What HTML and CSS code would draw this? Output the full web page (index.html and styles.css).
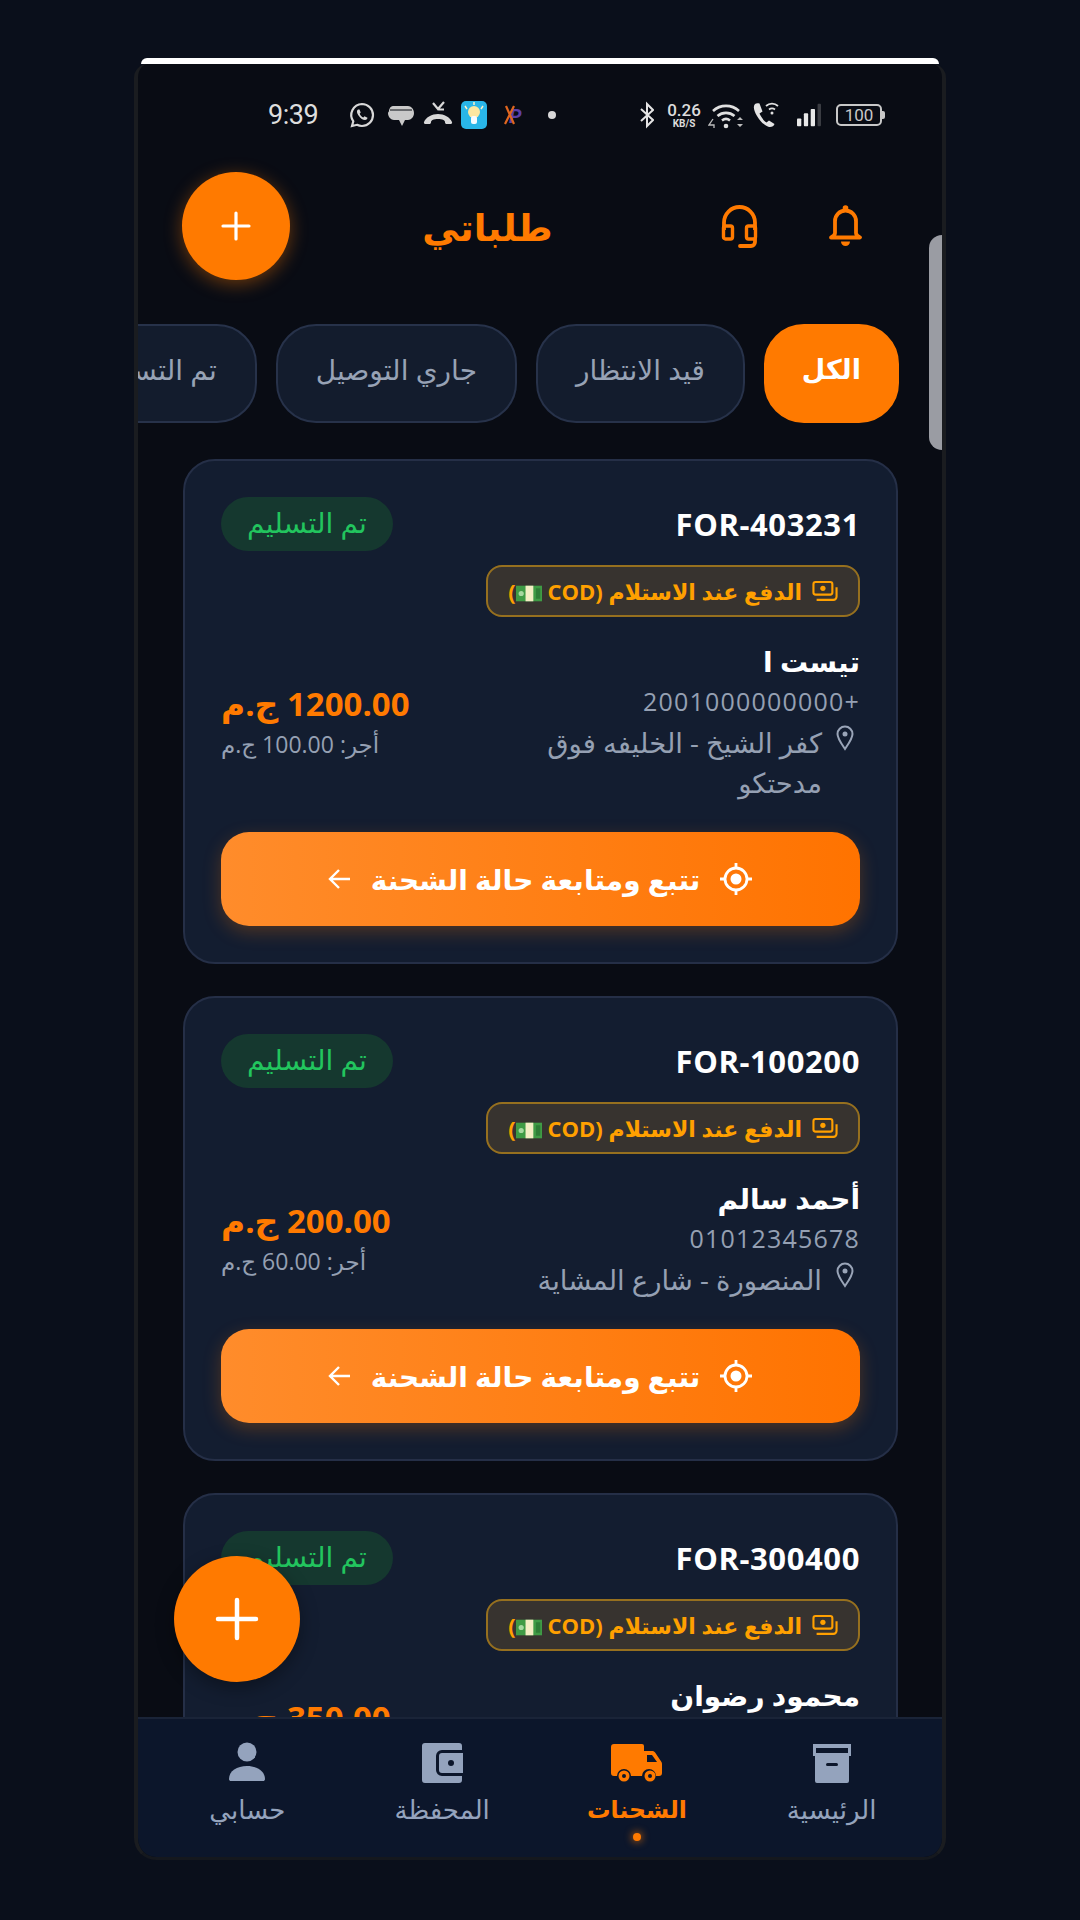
FILE: index.html
```html
<!DOCTYPE html>
<html lang="ar" dir="rtl">
<head>
<meta charset="utf-8">
<title>طلباتي</title>
<link rel="stylesheet" href="styles.css">
</head>
<body>
<div class="phone">
  <div class="strip"></div>
  <div class="screen">
  <div class="statusbar" dir="ltr">
    <span class="time">9:39</span>
    <svg class="si si-wa" viewBox="0 0 28 28"><path d="M14 3a11 11 0 0 1 0 22c-2 0-3.500-.4-5-1.200L4 25l1.300-4.700A11 11 0 0 1 14 3z" fill="none" stroke="#d8d8d8" stroke-width="2.200"/><path d="M10 8.500c-1.500 1-1.500 3 .5 6s4.500 4.500 6.500 4.500c1.500 0 2.500-1 2.500-2.200l-3-1.500-1.200 1.200c-1.500-.6-3-2.200-3.600-3.800l1-1.200-1.200-3z" fill="#d8d8d8"/></svg>
    <svg class="si si-msg" viewBox="0 0 28 28"><path d="M6 5h15c3 0 6 3 6 7s-3 7-6 7h-3l-3 6-3-6H7c-3 0-6-3-6-7 0-1 1-1 1-2s1-5 4-5z" fill="#c9c9c9"/><path d="M3 9h22" stroke="#090c13" stroke-width="1"/></svg>
    <svg class="si si-miss" viewBox="0 0 30 28"><path d="M1 21c2-5 8-8 14-8s12 3 14 8c.4 1-.3 2-1.300 2h-4c-1 0-1.700-.8-1.700-1.800 0-1-.5-1.700-1.500-2.200-1.500-.7-3.500-1-5.500-1s-4 .3-5.500 1c-1 .5-1.500 1.200-1.500 2.200 0 1-.7 1.800-1.700 1.800h-4C1.300 23 .6 22 1 21z" fill="#d8d8d8"/><path d="M10 2l5 6 6-7M15.500 8.500H21" fill="none" stroke="#d8d8d8" stroke-width="2.200"/></svg>
    <svg class="si si-app" viewBox="0 0 26 28"><rect width="26" height="28" rx="5" fill="#29b6e8"/><circle cx="13" cy="11" r="6" fill="#fbe7a0"/><rect x="10" y="15" width="6" height="8" rx="2" fill="#f4fbff"/><path d="M13 1v3M4 5l2 3M22 5l-2 3" stroke="#fdf3c8" stroke-width="1.500"/></svg>
    <svg class="si si-xp" viewBox="0 0 26 24"><text x="8" y="20" class="xp-text">P</text><path d="M5 3l8 18M13 3L4 21" stroke="#e0661f" stroke-width="2.200" fill="none"/></svg>
    <span class="sdot"></span>
    <svg class="si si-bt" viewBox="0 0 14 28"><path d="M1 8l12 11-6 6V3l6 6L1 20" fill="none" stroke="#e4e4e4" stroke-width="2"/></svg>
    <span class="speed"><b>0.26</b><i>KB/S</i></span>
    <svg class="si si-wifi" viewBox="0 0 36 30"><path d="M5 11a19 19 0 0 1 26 0M9.500 16a13 13 0 0 1 17 0M14 20.500a6.500 6.500 0 0 1 8 0" fill="none" stroke="#e0e0e0" stroke-width="2.600"/><circle cx="18" cy="26" r="2.300" fill="#e0e0e0"/><path d="M29 20l3-3 3 3zM29 24l3 3 3-3z" fill="#bdbdbd"/><path d="M5 19l-4 6h5v3" fill="none" stroke="#bdbdbd" stroke-width="1.300"/></svg>
    <svg class="si si-call" viewBox="0 0 30 30"><path d="M4 4c-2 2-1.500 6 2 12s8 10 12 11c2.500.5 5-1 5.500-3l-5.500-3.500-2.500 2C13 21 10 17 8.500 13.500l3-2L8.500 3.500C7 3 5 3 4 4z" fill="#e4e4e4"/><path d="M15 6a9 9 0 0 1 12 0M18 9.500a5 5 0 0 1 6 0" fill="none" stroke="#e0e0e0" stroke-width="1.800"/><circle cx="21" cy="13" r="1.500" fill="#e0e0e0"/></svg>
    <svg class="si si-sig" viewBox="0 0 28 28"><rect x="0" y="18" width="5" height="9" rx="1" fill="#e8e8e8"/><rect x="8" y="12" width="5" height="15" rx="1" fill="#e8e8e8"/><rect x="16" y="7" width="5" height="20" rx="1" fill="#e8e8e8"/><rect x="24" y="1" width="4" height="26" rx="1" fill="#3a3c42"/></svg>
    <span class="battery"><span class="battery-body">100</span><span class="battery-cap"></span></span>
  </div>

  <header class="topbar">
    <div class="top-icons">
      <svg class="icon-bell" viewBox="0 0 33 44"><circle cx="16.500" cy="4" r="2.800" fill="#ff7a00"/><path d="M6 29V17a10.500 10.500 0 0 1 21 0v12c0 2 2 3.500 4 4.500H2c2-1 4-2.500 4-4.500z" fill="none" stroke="#ff7a00" stroke-width="3.800" stroke-linejoin="round"/><path d="M12 37.500h9a4.500 4.500 0 0 1-9 0z" fill="#ff7a00"/></svg>
      <svg class="icon-head" viewBox="0 0 37 45"><path d="M3 26V18.500a15.500 15.500 0 0 1 31 0V26" fill="none" stroke="#ff7a00" stroke-width="3.800"/><rect x="2.500" y="22" width="9" height="13" rx="2" fill="none" stroke="#ff7a00" stroke-width="3.400"/><rect x="25.500" y="22" width="9" height="13" rx="2" fill="none" stroke="#ff7a00" stroke-width="3.400"/><path d="M34 35v3a4 4 0 0 1-4 4H19" fill="none" stroke="#ff7a00" stroke-width="3.800" stroke-linecap="round"/></svg>
    </div>
    <h1 class="title">طلباتي</h1>
    <button class="add-small"><svg viewBox="0 0 30 30"><path d="M15 2v26M2 15h26" stroke="#fff" stroke-width="3.200" stroke-linecap="round"/></svg></button>
  </header>

  <nav class="tabs">
    <span class="tab tab-active">الكل</span>
    <span class="tab">قيد الانتظار</span>
    <span class="tab">جاري التوصيل</span>
    <span class="tab">تم التسليم</span>
  </nav>

  <main class="list">
    <article class="card">
      <div class="card-head"><span class="order">FOR-403231</span><span class="state">تم التسليم</span></div>
      <div class="cod"><svg class="cod-icon" viewBox="0 0 24 20"><rect x="1" y="1" width="18" height="12" rx="2" fill="none" stroke="#ffa000" stroke-width="2"/><circle cx="10" cy="7" r="2.500" fill="#ffa000"/><path d="M23 6v9a3 3 0 0 1-3 3H4" fill="none" stroke="#ffa000" stroke-width="2"/></svg><span>الدفع عند الاستلام (COD <svg class="bill" viewBox="0 0 30 18"><rect width="30" height="18" fill="#3f9b45"/><rect x="11" width="9" height="18" fill="#f3eec4"/><circle cx="6" cy="9" r="3" fill="#a6d8a0"/><rect x="23" y="3" width="5" height="12" fill="#2e7d36"/></svg>)</span></div>
      <div class="card-body">
        <div class="customer">
          <div class="name">تيست ا</div>
          <div class="phone-no">+2001000000000</div>
          <div class="addr"><svg class="pin" viewBox="0 0 18 26"><path d="M9 1.500a7.500 7.500 0 0 1 7.500 7.500c0 4.500-4.500 10.500-7.500 15-3-4.500-7.500-10.500-7.500-15A7.500 7.500 0 0 1 9 1.500z" fill="none" stroke="#9aa5b8" stroke-width="2"/><circle cx="9" cy="9" r="2.500" fill="#9aa5b8"/></svg><span class="addr-text">كفر الشيخ - الخليفه فوق مدحتكو</span></div>
        </div>
        <div class="money"><div class="price">1200.00 ج.م</div><div class="fee">أجر: 100.00 ج.م</div></div>
      </div>
      <button class="track"><svg class="target" viewBox="0 0 34 34"><circle cx="17" cy="17" r="11" fill="none" stroke="#fff" stroke-width="2.800"/><circle cx="17" cy="17" r="5.500" fill="#fff"/><path d="M17 1v5M17 28v5M1 17h5M28 17h5" stroke="#fff" stroke-width="2.800"/></svg><span>تتبع ومتابعة حالة الشحنة</span><svg class="arrow" viewBox="0 0 24 24"><path d="M22 12H3M11 3l-9 9 9 9" fill="none" stroke="#fff" stroke-width="2.400"/></svg></button>
    </article>

    <article class="card">
      <div class="card-head"><span class="order">FOR-100200</span><span class="state">تم التسليم</span></div>
      <div class="cod"><svg class="cod-icon" viewBox="0 0 24 20"><rect x="1" y="1" width="18" height="12" rx="2" fill="none" stroke="#ffa000" stroke-width="2"/><circle cx="10" cy="7" r="2.500" fill="#ffa000"/><path d="M23 6v9a3 3 0 0 1-3 3H4" fill="none" stroke="#ffa000" stroke-width="2"/></svg><span>الدفع عند الاستلام (COD <svg class="bill" viewBox="0 0 30 18"><rect width="30" height="18" fill="#3f9b45"/><rect x="11" width="9" height="18" fill="#f3eec4"/><circle cx="6" cy="9" r="3" fill="#a6d8a0"/><rect x="23" y="3" width="5" height="12" fill="#2e7d36"/></svg>)</span></div>
      <div class="card-body">
        <div class="customer">
          <div class="name">أحمد سالم</div>
          <div class="phone-no">01012345678</div>
          <div class="addr"><svg class="pin" viewBox="0 0 18 26"><path d="M9 1.500a7.500 7.500 0 0 1 7.500 7.500c0 4.500-4.500 10.500-7.500 15-3-4.500-7.500-10.500-7.500-15A7.500 7.500 0 0 1 9 1.500z" fill="none" stroke="#9aa5b8" stroke-width="2"/><circle cx="9" cy="9" r="2.500" fill="#9aa5b8"/></svg><span class="addr-text">المنصورة - شارع المشاية</span></div>
        </div>
        <div class="money"><div class="price">200.00 ج.م</div><div class="fee">أجر: 60.00 ج.م</div></div>
      </div>
      <button class="track"><svg class="target" viewBox="0 0 34 34"><circle cx="17" cy="17" r="11" fill="none" stroke="#fff" stroke-width="2.800"/><circle cx="17" cy="17" r="5.500" fill="#fff"/><path d="M17 1v5M17 28v5M1 17h5M28 17h5" stroke="#fff" stroke-width="2.800"/></svg><span>تتبع ومتابعة حالة الشحنة</span><svg class="arrow" viewBox="0 0 24 24"><path d="M22 12H3M11 3l-9 9 9 9" fill="none" stroke="#fff" stroke-width="2.400"/></svg></button>
    </article>

    <article class="card">
      <div class="card-head"><span class="order">FOR-300400</span><span class="state">تم التسليم</span></div>
      <div class="cod"><svg class="cod-icon" viewBox="0 0 24 20"><rect x="1" y="1" width="18" height="12" rx="2" fill="none" stroke="#ffa000" stroke-width="2"/><circle cx="10" cy="7" r="2.500" fill="#ffa000"/><path d="M23 6v9a3 3 0 0 1-3 3H4" fill="none" stroke="#ffa000" stroke-width="2"/></svg><span>الدفع عند الاستلام (COD <svg class="bill" viewBox="0 0 30 18"><rect width="30" height="18" fill="#3f9b45"/><rect x="11" width="9" height="18" fill="#f3eec4"/><circle cx="6" cy="9" r="3" fill="#a6d8a0"/><rect x="23" y="3" width="5" height="12" fill="#2e7d36"/></svg>)</span></div>
      <div class="card-body">
        <div class="customer customer-clipped">
          <div class="name">محمود رضوان</div>
        </div>
        <div class="money"><div class="price">350.00 ج.م</div><div class="fee">&nbsp;</div></div>
      </div>
    </article>
  </main>

  <div class="scrollbar"></div>
  <button class="fab"><svg viewBox="0 0 44 44"><path d="M22 3v38M3 22h38" stroke="#fff" stroke-width="4.500" stroke-linecap="round"/></svg></button>

  <footer class="bottomnav">
    <div class="nav-item">
      <svg class="nav-icon" viewBox="0 0 44 44"><path d="M3 3h38v12h-2v25a2 2 0 0 1-2 2H7a2 2 0 0 1-2-2V15H3z" fill="#94a3bd"/><rect x="6" y="7" width="32" height="5" fill="#0c162b"/><rect x="16" y="22" width="12" height="3" rx="1.500" fill="#0c162b"/></svg>
      <span>الرئيسية</span>
    </div>
    <div class="nav-item nav-active">
      <svg class="nav-icon nav-truck" viewBox="0 0 52 40"><path d="M3 1h28a2 2 0 0 1 2 2v5h8c1.500 0 2.500.6 3.300 1.800l6 9c.5.7.7 1.500.7 2.200v9a3 3 0 0 1-3 3h-3a7 7 0 0 0-14 0H20a7 7 0 0 0-14 0H3a3 3 0 0 1-3-3V4a3 3 0 0 1 3-3z" fill="#ff7a00"/><path d="M36 12h5l5 7H36z" fill="#0c162b"/><circle cx="13" cy="33" r="5.500" fill="#ff7a00"/><circle cx="13" cy="33" r="2" fill="#0c162b"/><circle cx="39" cy="33" r="5.500" fill="#ff7a00"/><circle cx="39" cy="33" r="2" fill="#0c162b"/></svg>
      <span>الشحنات</span>
      <i class="nav-dot"></i>
    </div>
    <div class="nav-item">
      <svg class="nav-icon" viewBox="0 0 44 44"><path d="M5 2h34a3 3 0 0 1 3 3v4H22a6 6 0 0 0-6 6v14a6 6 0 0 0 6 6h20v4a3 3 0 0 1-3 3H5a3 3 0 0 1-3-3V5a3 3 0 0 1 3-3z" fill="#94a3bd"/><path d="M22 12h21v20H22a3 3 0 0 1-3-3V15a3 3 0 0 1 3-3z" fill="#94a3bd"/><circle cx="31" cy="22" r="3" fill="#0c162b"/></svg>
      <span>المحفظة</span>
    </div>
    <div class="nav-item">
      <svg class="nav-icon" viewBox="0 0 44 44"><circle cx="22" cy="11" r="9.500" fill="#94a3bd"/><path d="M4 38c0-8 8-13 18-13s18 5 18 13c0 1.500-1 2-2 2H6c-1 0-2-.5-2-2z" fill="#94a3bd"/></svg>
      <span>حسابي</span>
    </div>
  </footer>
  </div>
</div>
</body>
</html>
```
FILE: styles.css
```css
* { box-sizing: border-box; margin: 0; padding: 0; }
html, body { height: 100%; }
body {
  width: 1080px;
  height: 1920px;
  background: #0a0f1b;
  font-family: "Open Sans", "DejaVu Sans", sans-serif;
  padding: 58px 134px 60px 134px;
  overflow: hidden;
}
.phone {
  height: 100%;
  width: 812px;
  display: flex;
  flex-direction: column;
}
.strip {
  flex: none;
  height: 6px;
  margin: 0 7px;
  background: #fff;
  border-radius: 14px 14px 0 0;
}
.screen {
  position: relative;
  flex: 1;
  min-height: 0;
  display: flex;
  flex-direction: column;
  background: #090c14;
  border-left: 4px solid #1a1c20;
  border-right: 4px solid #1a1c20;
  border-bottom: 3px solid #15181e;
  border-radius: 14px 14px 22px 22px;
  overflow: hidden;
}
button { border: 0; font-family: inherit; }

/* status bar */
.statusbar {
  height: 102px;
  flex: none;
  display: flex;
  align-items: center;
  padding: 0 57px 0 130px;
  color: #e2e2e2;
}
.time { font: 400 27px Roboto, sans-serif; width: 52px; color: #dedede; letter-spacing: -.5px; }
.si { flex: none; display: block; }
.si-wa { width: 28px; height: 28px; margin-left: 28px; }
.si-msg { width: 28px; height: 28px; margin-left: 11px; }
.si-miss { width: 30px; height: 28px; margin-left: 8px; }
.si-app { width: 26px; height: 28px; margin-left: 8px; }
.si-xp { width: 26px; height: 24px; margin-left: 14px; }
.xp-text { font: italic 700 20px Roboto, sans-serif; fill: #5b3fa8; }
.sdot { width: 8px; height: 8px; border-radius: 50%; background: #d8d8d8; margin-left: 21px; flex: none; }
.si-bt { width: 14px; height: 28px; margin-left: auto; }
.speed { width: 36px; margin-left: 12px; display: flex; flex-direction: column; align-items: center; font-family: Roboto, sans-serif; line-height: 1; color: #dcdcdc; }
.speed b { font-weight: 500; font-size: 17px; }
.speed i { font-style: normal; font-weight: 700; font-size: 10px; }
.si-wifi { width: 36px; height: 30px; margin-left: 6px; }
.si-call { width: 30px; height: 30px; margin-left: 7px; }
.si-sig { width: 24px; height: 24px; margin-left: 16px; }
.battery { display: flex; align-items: center; margin-left: 15px; }
.battery-body { width: 46px; height: 22px; border: 2px solid #c8c8c8; border-radius: 5px; font: 400 17px/18px Roboto, sans-serif; text-align: center; color: #c8c8c8; }
.battery-cap { width: 3px; height: 8px; background: #c8c8c8; border-radius: 0 2px 2px 0; }

/* top bar */
.topbar {
  height: 120px;
  flex: none;
  display: flex;
  align-items: center;
  justify-content: space-between;
  padding: 0 80px 0 44px;
}
.top-icons { display: flex; align-items: center; gap: 71px; }
.icon-bell { width: 33px; height: 44px; flex: none; display: block; }
.icon-head { width: 37px; height: 45px; flex: none; display: block; }
.title { font-size: 37px; font-weight: 700; color: #ff7a00; line-height: 1; margin-right: 36px; }
.add-small {
  width: 108px; height: 108px; border-radius: 50%;
  background: #ff7a00;
  box-shadow: 0 4px 18px rgba(255,122,0,.4);
  display: flex; align-items: center; justify-content: center;
}
.add-small svg { width: 30px; height: 30px; }

/* tabs */
.tabs {
  flex: none;
  height: 99px;
  margin-top: 38px;
  display: flex;
  gap: 19px;
  padding-right: 43px;
  overflow: hidden;
}
.tab {
  flex: none;
  height: 99px;
  padding: 0 38px 10px;
  border-radius: 40px;
  background: #131c2d;
  border: 2px solid #27324a;
  color: #97a2b5;
  font-size: 28px;
  display: flex;
  align-items: center;
  white-space: nowrap;
}
.tab-active { background: #ff7a00; border-color: #ff7a00; color: #fff; font-weight: 700; font-size: 27px; padding: 0 36px 10px; }

/* list */
.list {
  flex: 1;
  min-height: 0;
  overflow: hidden;
  padding: 36px 44px 0 45px;
  display: flex;
  flex-direction: column;
  gap: 32px;
}
.card {
  flex: none;
  background: #131d30;
  border: 2px solid #252f47;
  border-radius: 32px;
  padding: 36px;
}
.card-head { display: flex; justify-content: space-between; align-items: center; height: 54px; }
.order { font: 700 31px "Open Sans", sans-serif; color: #fff; direction: ltr; letter-spacing: .6px; }
.state {
  height: 54px; width: 172px; border-radius: 27px;
  background: #15382f; color: #22c55e;
  font-size: 28px; font-weight: 500;
  display: flex; align-items: center; justify-content: center; padding-bottom: 4px;
}
.cod {
  margin-top: 14px;
  width: max-content;
  height: 52px;
  padding: 0 20px;
  display: flex;
  align-items: center;
  gap: 10px;
  border-radius: 16px;
  background: #37332f;
  border: 2px solid #96701f;
  color: #ffa000;
  font-size: 22px;
  font-weight: 700;
  white-space: pre;
}
.cod-icon { width: 26px; height: 21px; flex: none; }
.bill { width: 26px; height: 17px; vertical-align: -2px; }
.card-body { display: flex; justify-content: space-between; align-items: center; margin-top: 21px; }
.customer { width: 340px; }
.customer-clipped { height: 125px; }
.name { font-size: 28px; font-weight: 700; color: #fff; line-height: 46px; }
.phone-no { font: 400 25px/34px "Open Sans", sans-serif; color: #95a0b3; letter-spacing: 1.200px; }
.addr { display: flex; gap: 14px; margin-top: 5px; align-items: flex-start; }
.pin { width: 18px; height: 26px; flex: none; margin-top: 2px; margin-right: 6px; }
.addr-text { font-size: 27.5px; line-height: 40px; color: #95a0b3; }
.money { display: flex; flex-direction: column; align-items: flex-end; }
.price { font-size: 33px; font-weight: 700; color: #ff7a00; line-height: 42px; }
.fee { font-size: 23px; color: #95a0b3; line-height: 30px; margin-top: 4px; }
.track {
  margin-top: 29px;
  width: 100%;
  height: 94px;
  border-radius: 28px;
  background: linear-gradient(to right, #ff8c2b, #ff7300);
  box-shadow: 0 6px 18px rgba(255,122,0,.25);
  color: #fff;
  font-size: 28px;
  font-weight: 700;
  display: flex;
  align-items: center;
  justify-content: center;
  gap: 19px;
}
.target { width: 34px; height: 34px; flex: none; }
.arrow { width: 24px; height: 24px; flex: none; }

/* overlays */
.scrollbar {
  position: absolute;
  right: 0; top: 171px;
  width: 13px; height: 215px;
  background: #9a9ca3;
  border-radius: 14px 0 0 14px;
}
.fab {
  position: absolute;
  left: 36px; top: 1492px;
  width: 126px; height: 126px;
  border-radius: 50%;
  background: #ff7a00;
  box-shadow: 0 6px 18px rgba(0,0,0,.35);
  display: flex; align-items: center; justify-content: center;
}
.fab svg { width: 44px; height: 44px; }

/* bottom nav */
.bottomnav {
  flex: none;
  height: 140px;
  background: #0c162b;
  border-top: 2px solid #1a2438;
  display: grid;
  grid-template-columns: repeat(4, 1fr);
  padding: 22px 13px 0 12px;
}
.nav-item { display: flex; flex-direction: column; align-items: center; color: #94a3bd; font-size: 26px; position: relative; }
.nav-icon { width: 44px; height: 44px; flex: none; }
.nav-truck { width: 52px; }
.nav-item span { margin-top: 6px; line-height: 36px; }
.nav-active { color: #ff7a00; font-weight: 700; font-size: 23.500px; }
.nav-dot { position: absolute; top: 92px; width: 8px; height: 8px; border-radius: 50%; background: #ff7a00; box-shadow: 0 0 8px #ff7a00; }
```
